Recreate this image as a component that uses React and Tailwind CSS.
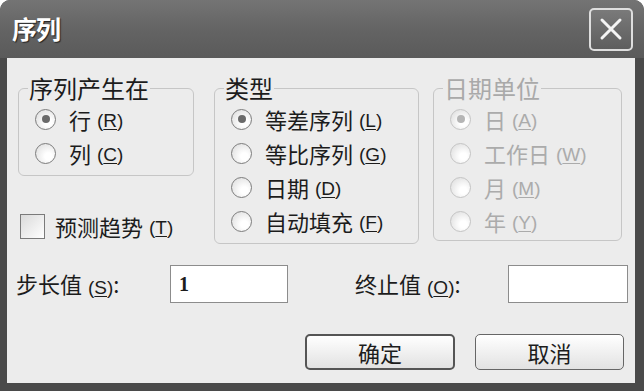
import React from 'react';

const Mn = ({ k }) => (
  <span className="ml-[6px] text-[19px] leading-none font-['Liberation_Sans',sans-serif] relative top-[1px]">
    (<span className="underline underline-offset-2">{k}</span>)
  </span>
);

const Radio = ({ checked, disabled, label, k }) => (
  <div className={`flex items-center h-[34px] pl-[16px] ${disabled ? 'text-[#ababab]' : 'text-[#1c1c1c]'}`}>
    <span
      className={`flex items-center justify-center w-[21px] h-[21px] rounded-full border bg-[radial-gradient(circle_at_65%_65%,#ffffff_20%,#d9d9d9_100%)] ${
        disabled ? 'border-[#c4c4c4]' : 'border-[#7c7c7c]'
      }`}
    >
      {checked && (
        <span className={`w-[8px] h-[8px] rounded-full ${disabled ? 'bg-[#b5b5b5]' : 'bg-[#6a6a6a]'}`} />
      )}
    </span>
    <span className="ml-[13px] text-[22px] leading-none">{label}</span>
    <Mn k={k} />
  </div>
);

const Group = ({ title, disabled, className, children }) => (
  <fieldset className={`border border-[#c6c6c6] rounded-[6px] pt-[2px] ${className}`}>
    <legend className={`ml-[9px] px-[1px] text-[24px] leading-[24px] ${disabled ? 'text-[#a9a9a9]' : 'text-[#1c1c1c]'}`}>
      {title}
    </legend>
    {children}
  </fieldset>
);

export default function App() {
  return (
    <div className="w-[644px] h-[391px] bg-white font-['Noto_Sans_CJK_SC',sans-serif]">
      <div className="flex flex-col h-full rounded-t-[10px] bg-[#4a4a4a] overflow-hidden">
        {/* title bar */}
        <div className="flex items-center justify-between h-[58px] pl-[12px] pr-[11px] bg-gradient-to-b from-[#747474] via-[#646464] to-[#5a5a5a]">
          <span className="text-[25px] font-bold text-white tracking-[-1px] [text-shadow:1px_1px_1px_#222]">序列</span>
          <button className="flex items-center justify-center w-[44px] h-[43px] rounded-[5px] border-2 border-[#dedede] bg-gradient-to-b from-[#7a7a7a] to-[#5e5e5e]">
            <svg width="26" height="26" viewBox="0 0 26 26">
              <path d="M4 4 L22 22 M22 4 L4 22" stroke="#f4f4f4" strokeWidth="3" strokeLinecap="round" />
            </svg>
          </button>
        </div>

        {/* client area */}
        <div className="flex-1 ml-[7px] mr-[9px] mb-[8px] bg-[#ececec] flex flex-col">
          <div className="flex pt-[18px] pl-[11px]">
            <div className="w-[176px] flex flex-col">
              <Group title="序列产生在" className="h-[100px]">
                <Radio checked label="行" k="R" />
                <Radio label="列" k="C" />
              </Group>
              <div className="flex items-center h-[34px] mt-[33px] ml-[2px] text-[#1c1c1c]">
                <span className="w-[25px] h-[25px] border border-[#7a7a7a] bg-gradient-to-br from-[#dadada] to-white" />
                <span className="ml-[10px] text-[22px] leading-none">预测趋势</span>
                <Mn k="T" />
              </div>
            </div>
            <Group title="类型" className="ml-[20px] w-[205px] h-[168px]">
              <Radio checked label="等差序列" k="L" />
              <Radio label="等比序列" k="G" />
              <Radio label="日期" k="D" />
              <Radio label="自动填充" k="F" />
            </Group>
            <Group title="日期单位" disabled className="ml-[14px] w-[189px] h-[165px]">
              <Radio checked disabled label="日" k="A" />
              <Radio disabled label="工作日" k="W" />
              <Radio disabled label="月" k="M" />
              <Radio disabled label="年" k="Y" />
            </Group>
          </div>

          <div className="flex items-center mt-[21px] pl-[9px] text-[#1c1c1c]">
            <span className="w-[154px] text-[22px] leading-none">
              步长值<Mn k="S" />:
            </span>
            <div className="w-[118px] h-[38px] border border-[#8c8c8c] bg-white flex items-center pl-[8px] text-[20px] font-['Liberation_Serif',serif] font-bold">
              1
            </div>
            <span className="ml-[67px] w-[153px] text-[22px] leading-none">
              终止值<Mn k="O" />:
            </span>
            <div className="w-[120px] h-[38px] border border-[#8c8c8c] bg-white" />
          </div>

          <div className="flex justify-end gap-[20px] mt-[31px] pr-[11px]">
            <button className="w-[150px] h-[36px] rounded-[5px] border-2 border-[#555] bg-gradient-to-b from-white to-[#e2e2e2] text-[22px] leading-none text-[#1c1c1c]">
              确定
            </button>
            <button className="w-[149px] h-[36px] rounded-[5px] border border-[#666] bg-gradient-to-b from-white to-[#e2e2e2] text-[22px] leading-none text-[#1c1c1c]">
              取消
            </button>
          </div>
        </div>
      </div>
    </div>
  );
}
